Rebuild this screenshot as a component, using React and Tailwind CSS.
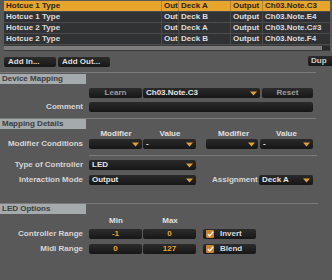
import React from 'react';

const rows = [
  { name: 'Hotcue 1 Type', io: 'Out', deck: 'Deck A', mode: 'Output', note: 'Ch03.Note.C3', active: true },
  { name: 'Hotcue 1 Type', io: 'Out', deck: 'Deck B', mode: 'Output', note: 'Ch03.Note.E4' },
  { name: 'Hotcue 2 Type', io: 'Out', deck: 'Deck A', mode: 'Output', note: 'Ch03.Note.C#3' },
  { name: 'Hotcue 2 Type', io: 'Out', deck: 'Deck B', mode: 'Output', note: 'Ch03.Note.F4' },
];

const Arrow = () => (
  <svg width="7" height="5" viewBox="0 0 7 5" className="shrink-0">
    <path d="M0 0.5 L7 0.5 L3.5 4.5 Z" fill="#e3a032" />
  </svg>
);

const Select = ({ value = '', className = '' }) => (
  <div className={`h-[10px] flex items-center justify-between pl-[3px] pr-[3px] rounded-[2px] bg-gradient-to-b from-[#2a2a2a] to-[#161616] text-[#e6e6e6] ${className}`}>
    <span>{value}</span>
    <Arrow />
  </div>
);

const Btn = ({ children, className = '' }) => (
  <div className={`h-[10px] flex items-center justify-center rounded-[2px] bg-gradient-to-b from-[#2c2c2c] to-[#171717] ${className}`}>
    {children}
  </div>
);

const Tab = ({ children }) => (
  <div className="w-[86px] h-[10px] bg-[#a5abad] text-[#3c3c3c] pl-[2px] flex items-center">{children}</div>
);

const Line = ({ className = '' }) => <div className={`h-px bg-[#7b7b7b] ${className}`} />;

const Label = ({ children }) => (
  <div className="w-[89px] shrink-0 pr-[6px] text-right text-[#d6d6d6]">{children}</div>
);

const Check = ({ label }) => (
  <Btn className="w-[53px] !justify-start pl-[3px] gap-[6px]">
    <div className="w-[8px] h-[8px] rounded-[1px] bg-[#c8852c] flex items-center justify-center">
      <svg width="7" height="6" viewBox="0 0 7 6">
        <path d="M0.8 3 L2.7 5 L6.2 0.8" stroke="#f4f0e6" strokeWidth="1.4" fill="none" />
      </svg>
    </div>
    <span className="text-[#dcdcdc]">{label}</span>
  </Btn>
);

export default function App() {
  return (
    <div
      className="w-[332px] h-[280px] overflow-hidden bg-[#595959] text-[8px] font-bold leading-none"
      style={{ fontFamily: '"Liberation Sans", Arial, sans-serif' }}
    >
      {/* mapping table */}
      <div className="pl-[4px] pr-[2px] pt-[1px]">
        {rows.map((r, i) => (
          <div
            key={i}
            className={`grid grid-cols-[157px_17px_52px_32px_68px] h-[11px] border-b border-[#4c4c4c] ${
              r.active ? 'bg-[#e7a52c] text-[#2b2416]' : 'bg-[#313234] text-[#dedede]'
            }`}
          >
            <div className="flex items-center pl-[2px]">{r.name}</div>
            <div className={`flex items-center pl-[2px] border-l ${r.active ? 'border-[#b9822a]' : 'border-[#4a4a4a]'}`}>{r.io}</div>
            <div className={`flex items-center pl-[2px] border-l ${r.active ? 'border-[#b9822a]' : 'border-[#4a4a4a]'}`}>{r.deck}</div>
            <div className={`flex items-center pl-[2px] border-l ${r.active ? 'border-[#b9822a]' : 'border-[#4a4a4a]'}`}>{r.mode}</div>
            <div className={`flex items-center pl-[2px] border-l ${r.active ? 'border-[#b9822a]' : 'border-[#4a4a4a]'}`}>{r.note}</div>
          </div>
        ))}
        <div className="h-[6px] bg-[#3a3a3a] flex items-center">
          <div className="h-[4px] w-[318px] bg-[#7d7d7d]" />
          <div className="h-[4px] flex-1 bg-[#2a2a2a]" />
        </div>
      </div>

      <div className="flex items-start mt-[5px] pl-[4px]">
        <Btn className="w-[52px] mt-[1px] !justify-start pl-[4px] text-[#dedede]">Add In...</Btn>
        <Btn className="w-[52px] mt-[1px] ml-[2px] !justify-start pl-[4px] text-[#dedede]">Add Out...</Btn>
        <div className="flex-1" />
        <Btn className="w-[24px] !justify-start pl-[3px] rounded-r-none text-[#cfcfcf]">Dup</Btn>
      </div>

      {/* device mapping */}
      <Line className="mt-[5px] w-[316px]" />
      <div className="mt-px">
        <Tab>Device Mapping</Tab>
      </div>
      <div className="flex mt-[4px]">
        <Label />
        <Btn className="w-[53px] text-[#9d9d9d]">Learn</Btn>
        <Select value="Ch03.Note.C3" className="w-[117px] ml-px" />
        <Btn className="w-[51px] ml-[2px] text-[#9d9d9d]">Reset</Btn>
      </div>
      <div className="flex items-center mt-[4px]">
        <Label>Comment</Label>
        <div className="w-[224px] h-[10px] rounded-[2px] bg-gradient-to-b from-[#2a2a2a] to-[#161616]" />
      </div>

      {/* mapping details */}
      <Line className="mt-[6px] w-[316px]" />
      <Tab>Mapping Details</Tab>
      <div className="flex h-[10px] items-center text-[#e0e0e0]">
        <div className="w-[89px]" />
        <div className="w-[54px] text-center">Modifier</div>
        <div className="w-[54px] text-center">Value</div>
        <div className="w-[63px] text-right pr-[11px]">Modifier</div>
        <div className="w-[53px] text-center">Value</div>
      </div>
      <div className="flex items-center mt-[0px]">
        <Label>Modifier Conditions</Label>
        <Select className="w-[53px]" />
        <Select value="-" className="w-[53px] ml-px" />
        <Select className="w-[52px] ml-[10px]" />
        <Select value="-" className="w-[53px] ml-[2px]" />
      </div>
      <Line className="mt-[6px] ml-[89px] w-[228px]" />
      <div className="flex items-center mt-[4px]">
        <Label>Type of Controller</Label>
        <Select value="LED" className="w-[107px]" />
      </div>
      <div className="flex items-center mt-[5px]">
        <Label>Interaction Mode</Label>
        <Select value="Output" className="w-[107px]" />
        <div className="ml-[16px] w-[47px] text-[#d6d6d6]">Assignment</div>
        <Select value="Deck A" className="w-[54px]" />
      </div>

      {/* led options */}
      <Line className="mt-[18px] w-[318px]" />
      <Tab>LED Options</Tab>
      <div className="flex h-[11px] items-end text-[#e0e0e0]">
        <div className="w-[89px]" />
        <div className="w-[54px] text-center">Min</div>
        <div className="w-[54px] text-center">Max</div>
      </div>
      <div className="flex items-center mt-[4px]">
        <Label>Controller Range</Label>
        <Btn className="w-[53px] text-[#e7a52c]">-1</Btn>
        <Btn className="w-[53px] ml-px text-[#e7a52c]">0</Btn>
        <div className="ml-[7px]">
          <Check label="Invert" />
        </div>
      </div>
      <div className="flex items-center mt-[5px]">
        <Label>Midi Range</Label>
        <Btn className="w-[53px] text-[#e7a52c]">0</Btn>
        <Btn className="w-[53px] ml-px text-[#e7a52c]">127</Btn>
        <div className="ml-[7px]">
          <Check label="Blend" />
        </div>
      </div>
    </div>
  );
}
